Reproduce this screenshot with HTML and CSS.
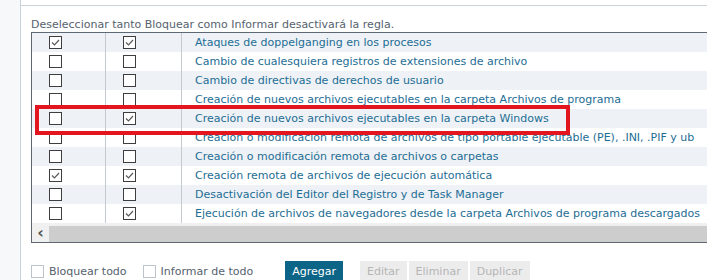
FILE: index.html
```html
<!DOCTYPE html>
<html lang="es">
  <head>
    <meta charset="UTF-8" />
    <meta name="viewport" content="width=device-width, initial-scale=1.0" />
    <title>Reglas de comportamiento</title>
    <link rel="stylesheet" href="styles.css">
  </head>
  <body>
    <div class="layout">
      <div class="sidebar"></div>

      <div class="main">
        <div class="panel">
          <p class="note">Deseleccionar tanto Bloquear como Informar desactivará la regla.</p>

          <div class="grid">
            <div class="rows" id="ruleList">
              <!-- filas generadas abajo -->
            </div>
            <div class="hscroll">
              <span class="arrow">&lsaquo;</span>
              <span class="track"></span>
            </div>
          </div>

          <div class="actions">
            <label class="opt"><span class="box"></span>Bloquear todo</label>
            <label class="opt opt-second"><span class="box"></span>Informar de todo</label>
            <button class="btn btn-primary">Agregar</button>
            <button class="btn btn-off btn-first-off">Editar</button>
            <button class="btn btn-off">Eliminar</button>
            <button class="btn btn-off">Duplicar</button>
          </div>
        </div>
      </div>
    </div>

    <div class="highlight"></div>

    <script>
      // [bloquear, informar, nombre]
      const rules = [
        [true, true, "Ataques de doppelganging en los procesos"],
        [false, false, "Cambio de cualesquiera registros de extensiones de archivo"],
        [false, false, "Cambio de directivas de derechos de usuario"],
        [false, false, "Creación de nuevos archivos ejecutables en la carpeta Archivos de programa"],
        [false, true, "Creación de nuevos archivos ejecutables en la carpeta Windows"],
        [false, false, "Creación o modificación remota de archivos de tipo portable ejecutable (PE), .INI, .PIF y ub"],
        [false, false, "Creación o modificación remota de archivos o carpetas"],
        [true, true, "Creación remota de archivos de ejecución automática"],
        [false, false, "Desactivación del Editor del Registro y de Task Manager"],
        [false, true, "Ejecución de archivos de navegadores desde la carpeta Archivos de programa descargados"],
      ];

      const tick = '<svg viewBox="0 0 11 11" width="11" height="11"><polyline points="2,5.5 4.5,8 9,3" fill="none" stroke="#5a5a5a" stroke-width="1.2"/></svg>';

      function checkbox(on) {
        return `<span class="cb">${on ? tick : ""}</span>`;
      }

      const list = document.getElementById("ruleList");
      rules.forEach((r) => {
        const row = document.createElement("div");
        row.className = "row";
        row.innerHTML = `
          <div class="cell cell-check">${checkbox(r[0])}</div>
          <div class="cell cell-check cell-check2">${checkbox(r[1])}</div>
          <div class="cell cell-name">${r[2]}</div>
        `;
        list.appendChild(row);
      });
    </script>
  </body>
</html>
```

FILE: styles.css
```css
body {
  margin: 0;
  padding: 0;
  font-family: "DejaVu Sans", Verdana, sans-serif;
  font-size: 11px;
  background-color: #ffffff;
  overflow: hidden;
}

.layout {
  display: flex;
  height: 280px;
}

.sidebar {
  width: 20px;
  flex: none;
  background-color: #f6f8fa;
  border-right: 1px solid #c9d2da;
}

.main {
  flex: 1;
  min-width: 0;
  padding-top: 5px;
}

.panel {
  border-top: 1px solid #c9d2da;
  padding: 12px 0 0 10px;
}

.note {
  margin: 0;
  line-height: 14px;
  color: #56626e;
  white-space: nowrap;
}

.grid {
  width: 760px;
  border-top: 1px solid #5e6873;
  border-left: 1px solid #5e6873;
  border-bottom: 1px solid #5e6873;
}

.row {
  display: flex;
  height: 19px;
  background-color: #ffffff;
}

.row:nth-child(odd) {
  background-color: #eef2f6;
}

.cell {
  display: flex;
  align-items: center;
  height: 19px;
}

.cell-check {
  flex: none;
  width: 74px;
  padding-left: 17px;
  box-sizing: border-box;
  border-right: 1px solid #c3c9cf;
}

.cell-check2 {
  width: 76px;
}

.cell-name {
  flex: none;
  padding-left: 13px;
  color: #1d6d94;
  white-space: nowrap;
}

.cb {
  width: 11px;
  height: 11px;
  border: 1px solid #3e3e3e;
  background-color: #ffffff;
  display: flex;
}

.hscroll {
  display: flex;
  align-items: flex-end;
  height: 19px;
  background-color: #f0f0f0;
}

.arrow {
  width: 17px;
  height: 16px;
  line-height: 14px;
  font-size: 16px;
  font-weight: bold;
  color: #555;
  text-align: center;
}

.track {
  flex: 1;
  height: 16px;
  background-color: #cdcdcd;
}

.actions {
  display: flex;
  align-items: center;
  margin-top: 18px;
  height: 20px;
}

.opt {
  display: flex;
  align-items: center;
  color: #56626e;
}

.opt .box {
  width: 11px;
  height: 11px;
  border: 1px solid #bcc3ca;
  margin-right: 5px;
}

.opt-second {
  margin-left: 16px;
}

.btn {
  font-family: inherit;
  font-size: 11px;
  height: 20px;
  padding: 0 7px;
  border: none;
  margin-left: 2px;
}

.btn-primary {
  margin-left: 32px;
  background-color: #0c6586;
  color: #ffffff;
}

.btn-off {
  background-color: #ececec;
  color: #b5b5b5;
}

.btn-first-off {
  margin-left: 17px;
}

.highlight {
  position: absolute;
  left: 35px;
  top: 105px;
  width: 527px;
  height: 22px;
  border: 4px solid #e3151f;
}
```
